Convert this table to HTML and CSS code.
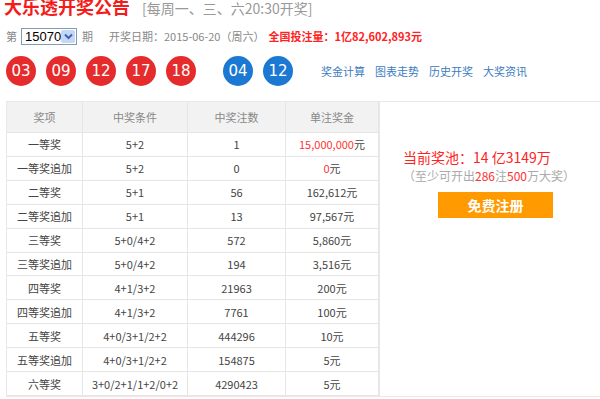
FILE: index.html
```html
<!DOCTYPE html>
<html lang="zh-CN">
<head>
    <meta charset="UTF-8">
    <title>大乐透开奖公告</title>
    <link rel="stylesheet" href="styles.css">
</head>
<body>
    <div class="page">
        <div class="title-row">
            <h1>大乐透开奖公告</h1>
            <span class="subtitle">[每周一、三、六20:30开奖]</span>
        </div>

        <div class="info-row">
            <span>第</span>
            <span class="issue-select">15070<span class="arrow"><svg width="9" height="7" viewBox="0 0 9 7"><path d="M1 1.5 L4.5 5 L8 1.5" fill="none" stroke="#3568b8" stroke-width="2"/></svg></span></span>
            <span>期</span>
            <span class="draw-date">开奖日期：2015-06-20（周六）</span>
            <span class="sales">全国投注量：1亿82,602,893元</span>
        </div>

        <div class="ball-row">
            <div class="balls">
                <span class="ball red">03</span>
                <span class="ball red">09</span>
                <span class="ball red">12</span>
                <span class="ball red">17</span>
                <span class="ball red">18</span>
            </div>
            <div class="balls">
                <span class="ball blue">04</span>
                <span class="ball blue">12</span>
            </div>
            <div class="links">
                <a href="#">奖金计算</a>
                <a href="#">图表走势</a>
                <a href="#">历史开奖</a>
                <a href="#">大奖资讯</a>
            </div>
        </div>

        <div class="result-box">
            <table class="prize-table">
                <thead>
                    <tr><th>奖项</th><th>中奖条件</th><th>中奖注数</th><th>单注奖金</th></tr>
                </thead>
                <tbody>
                    <tr><td>一等奖</td><td>5+2</td><td>1</td><td><em>15,000,000</em>元</td></tr>
                    <tr><td>一等奖追加</td><td>5+2</td><td>0</td><td><em>0</em>元</td></tr>
                    <tr><td>二等奖</td><td>5+1</td><td>56</td><td>162,612元</td></tr>
                    <tr><td>二等奖追加</td><td>5+1</td><td>13</td><td>97,567元</td></tr>
                    <tr><td>三等奖</td><td>5+0/4+2</td><td>572</td><td>5,860元</td></tr>
                    <tr><td>三等奖追加</td><td>5+0/4+2</td><td>194</td><td>3,516元</td></tr>
                    <tr><td>四等奖</td><td>4+1/3+2</td><td>21963</td><td>200元</td></tr>
                    <tr><td>四等奖追加</td><td>4+1/3+2</td><td>7761</td><td>100元</td></tr>
                    <tr><td>五等奖</td><td>4+0/3+1/2+2</td><td>444296</td><td>10元</td></tr>
                    <tr><td>五等奖追加</td><td>4+0/3+1/2+2</td><td>154875</td><td>5元</td></tr>
                    <tr><td>六等奖</td><td>3+0/2+1/1+2/0+2</td><td>4290423</td><td>5元</td></tr>
                </tbody>
            </table>

            <div class="pool">
                <div class="pool-amount">当前奖池：14 亿3149万</div>
                <div class="pool-note">（至少可开出<em>286</em>注<em>500</em>万大奖）</div>
                <a class="register" href="#">免费注册</a>
            </div>
        </div>
    </div>
</body>
</html>
```

FILE: styles.css
```css
body {
    margin: 0;
    background: #fff;
    overflow: hidden;
    font-family: "Noto Sans CJK SC", "DejaVu Sans", sans-serif;
    font-size: 12px;
    color: #333;
}
.page {
    width: 600px;
    padding-left: 6px;
    box-sizing: border-box;
}

/* Title */
.title-row {
    display: flex;
    align-items: baseline;
    gap: 12px;
    height: 20px;
    margin-top: -6px;
}
h1 {
    margin: 0;
    font-size: 18px;
    line-height: 24px;
    color: #f51b1b;
    font-weight: bold;
    margin-left: -2px;
}
.subtitle {
    font-size: 14px;
    color: #999;
}

/* Issue / date row */
.info-row {
    display: flex;
    align-items: center;
    height: 18px;
    margin-top: 13px;
    font-size: 11px;
    color: #888;
}
.issue-select {
    display: inline-flex;
    align-items: center;
    justify-content: space-between;
    width: 51px;
    height: 15px;
    margin: 0 5px 0 4px;
    padding-left: 3px;
    border: 1px solid #7f9db9;
    color: #000;
    font-family: "Liberation Sans", sans-serif;
    font-size: 13px;
}
.arrow {
    display: inline-flex;
    align-items: center;
    justify-content: center;
    width: 14px;
    height: 13px;
    margin-right: 1px;
    background: #c6d6f3;
    border-radius: 2px;
}
.draw-date {
    margin-left: 16px;
}
.sales {
    margin-left: 4px;
    color: #f22;
    font-weight: bold;
}

/* Balls */
.ball-row {
    display: flex;
    align-items: center;
    height: 30px;
    margin-top: 11px;
}
.balls {
    display: flex;
    gap: 10px;
    margin-right: 27px;
}
.ball {
    display: flex;
    align-items: center;
    justify-content: center;
    width: 30px;
    height: 30px;
    border-radius: 50%;
    color: #fff;
    font-family: "DejaVu Sans", sans-serif;
    font-size: 15px;
}
.ball.red {
    background: #e52b2b;
}
.ball.blue {
    background: #1b78d3;
}
.links {
    display: flex;
    gap: 10px;
    margin-left: 1px;
}
.links a {
    color: #3b7cc0;
    text-decoration: none;
    font-size: 11px;
}

/* Result box */
.result-box {
    display: flex;
    margin-top: 15px;
    border: 1px solid #e8e8e8;
    border-right: 0;
    height: 294px;
}
.prize-table {
    flex: none;
    border-collapse: collapse;
    width: 368px;
    table-layout: fixed;
    text-align: center;
    font-size: 11px;
    color: #444;
}
.prize-table th,
.prize-table td {
    border: 1px solid #e6e6e6;
    padding: 0;
}
.prize-table tr > :first-child { width: 75px; border-left: 0; }
.prize-table tr > :nth-child(2) { width: 104px; }
.prize-table tr > :nth-child(3) { width: 97px; }
.prize-table tr > :nth-child(4) { width: 92px; }
.prize-table tbody tr:first-child > * {
    border-top: 0;
}
.prize-table th {
    height: 30px;
    background: #f2f2f2;
    color: #888;
    font-weight: normal;
    border-top: 0;
}
.prize-table td {
    height: 22.8px;
}
.prize-table em {
    font-style: normal;
    color: #f33;
}

/* Jackpot panel */
.pool {
    display: flex;
    flex-direction: column;
    align-items: flex-start;
    padding: 45px 0 0 23px;
    border-left: 1px solid #e8e8e8;
}
.pool-amount {
    font-size: 14px;
    line-height: 20px;
    color: #f22;
}
.pool-note {
    line-height: 18px;
    color: #aaa;
}
.pool-note em {
    font-style: normal;
    color: #f33;
}
.register {
    display: flex;
    align-items: center;
    justify-content: center;
    width: 115px;
    height: 26px;
    margin: 7px 0 0 35px;
    background: #ff9a00;
    color: #fff;
    font-size: 14px;
    font-weight: bold;
    text-decoration: none;
}
```
